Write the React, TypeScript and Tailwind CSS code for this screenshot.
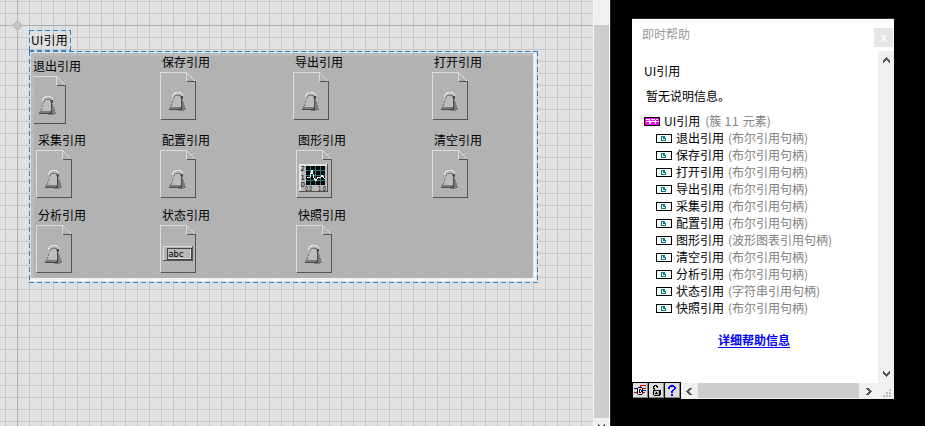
import React from "react";

type Kind = "bool" | "graph" | "string";

const PALETTE: Record<string, string> = {
  k: "#000000",
  w: "#e2e2e2",
  d: "#4b4b4b",
  s: "#7b7b7b",
  g: "#bdbdbd",
  b: "#0000ff",
  r: "#e00000",
  t: "#00807c",
  m: "#ff00ff",
  f: "#ffffff",
  c: "#585858",
};

function Pixels({ rows, className = "" }: { rows: string[]; className?: string }) {
  const w = rows[0].length;
  return (
    <svg width={w} height={rows.length} viewBox={`0 0 ${w} ${rows.length}`} shapeRendering="crispEdges" className={`block shrink-0 ${className}`}>
      {rows.flatMap((row, y) =>
        row.split("").map((c, x) => (c === "." ? null : <rect key={`${x}-${y}`} x={x} y={y} width={1} height={1} fill={PALETTE[c]} />)),
      )}
    </svg>
  );
}

const KNOB = [
  "......wwwwww.....",
  "....www....ww....",
  "....w........w...",
  "...ww.ssssss.w...",
  "...w.sgggggsdd...",
  ".....sgggggsdd...",
  ".....gggggggdd...",
  "....sgggggggd....",
  "....ggggggggds...",
  "...s.gggggggds...",
  "...s.gggggggdss..",
  "...gggggggggdss..",
  "..s.ggggggggdss..",
  "..s.ggggggggdsss.",
  ".s..ggggggggdsss.",
  ".sssssssssssdsss.",
  "sssssssssssddssss",
  "dddddddddddddssss",
  ".........ssssss..",
];

const CHEVRON_UP = ["...c...", "..ccc..", ".ccccc.", "ccc.ccc", "cc...cc", "c.....c"];
const CHEVRON_DOWN = [...CHEVRON_UP].reverse();
const CHEVRON_RIGHT = ["ccc...", ".ccc..", "..ccc.", "...ccc", "..ccc.", ".ccc..", "ccc..."];
const CHEVRON_LEFT = CHEVRON_RIGHT.map((r) => r.split("").reverse().join(""));

const REF_ICON = [
  "kkkkkkkkkkkkkkkk",
  "kffffffffffffffk",
  "kffffttttffffffk",
  "kfffftfttffffffk",
  "kfffftftttfffffk",
  "kfffftffftfffffk",
  "kfffftttttfffffk",
  "kffffffffffffffk",
  "kkkkkkkkkkkkkkkk",
];

const CLUSTER_ICON = [
  "kkkkkkkkkkkkkkkk",
  "kmmmmmmmmmmmmmmk",
  "kmffffmffffmffmk",
  "kmmmmfmmmmmfmmmk",
  "kmfffffffffffffk",
  "kmmmmffmmmmfmmmk",
  "kmmmmffmmmmfmmmk",
  "kmmmmmmmmmmmmmmk",
  "kkkkkkkkkkkkkkkk",
];

const WIRES = [
  "......rrrrrr",
  "......r.....",
  "....kkkk....",
  "bbbkffffkrrr",
  "...kfkkfk...",
  "...kfkfkkbbb",
  "...kfkfkk...",
  "rrrkfkkfkrr.",
  "...kffffk...",
  "....kkkk....",
];

const LOCK = [
  "..kkk....",
  ".kk.kk...",
  ".k...k...",
  ".kk......",
  "..k......",
  ".kkkkkkkk",
  ".kgggggkk",
  ".kggkggkk",
  ".kgkkkgkk",
  ".kgggggkk",
  "..kkkkkk.",
];

const QUESTION = [
  "..bbbb..",
  ".bbbbbb.",
  "bb....bb",
  "bb....bb",
  ".....bb.",
  "....bb..",
  "...bb...",
  "...bb...",
  "........",
  "...bb...",
  "...bb...",
];

function DocIcon({ kind }: { kind: Kind }) {
  return (
    <svg width="36" height="48" viewBox="0 0 36 48" className="block" shapeRendering="crispEdges">
      <path d="M0 0H27V1H1V47H0Z" fill="#dcdcdc" />
      <path d="M26 1h1v8h-1z" fill="#dcdcdc" />
      {[0, 1, 2, 3, 4, 5, 6, 7].map((i) => (
        <rect key={i} x={27 + i} y={1 + i} width="1" height="1" fill="#dcdcdc" />
      ))}
      <path d="M27 9h9v39H1v-1h34V10h-8z" fill="#555" />
      {kind === "bool" && (
        <g transform="translate(9 20)">
          {KNOB.flatMap((row, y) =>
            row.split("").map((c, x) => (c === "." ? null : <rect key={`${x}-${y}`} x={x} y={y} width="1" height="1" fill={PALETTE[c]} />)),
          )}
        </g>
      )}
      {kind === "string" && (
        <g>
          <path d="M3 21h30v15H3z" fill="#555" />
          <path d="M3 21h29v14H3z" fill="#ddd" />
          <path d="M4 22h28v13H4z" fill="#b2b2b2" />
          <path d="M7 23h25v12H7z" fill="#444" />
          <path d="M8 24h23v10H8z" fill="#ddd" />
          <path d="M8 24h22v9H8z" fill="#b8b8b8" />
          <text x="8.5" y="32" textLength="15" lengthAdjust="spacingAndGlyphs" fontSize="9" fontFamily="DejaVu Sans" fill="#000">abc</text>
        </g>
      )}
      {kind === "graph" && (
        <g>
          <path d="M3 14h29v28H3z" fill="#505050" />
          <path d="M3 14h28v27H3z" fill="#e4e4e4" />
          <path d="M5 16h26v25H5z" fill="#bababa" />
          <path d="M10 16h19v19H10z" fill="#050505" />
          <path d="M10 20.5h19M10 25.5h19M10 30.5h19M14.5 16v19M19.5 16v19M24.5 16v19" stroke="#287878" fill="none" />
          <path d="M11 27h3l2-7 2 8 2 3 2-4h3l1-2 3 4" stroke="#fff" fill="none" />
          <g fill="#000" fontFamily="DejaVu Sans" fontSize="7">
            <text x="4.5" y="21">2</text>
            <text x="4.5" y="30">1</text>
            <text x="4.5" y="37">0</text>
            <text x="9" y="40.5" textLength="7" lengthAdjust="spacingAndGlyphs">0.0</text>
            <text x="22" y="40.5" textLength="8" lengthAdjust="spacingAndGlyphs">1.0</text>
          </g>
        </g>
      )}
    </svg>
  );
}

const REFS: { name: string; x: number; y: number; kind: Kind }[] = [
  { name: "退出引用", x: 30, y: 76, kind: "bool" },
  { name: "保存引用", x: 160, y: 72, kind: "bool" },
  { name: "导出引用", x: 293, y: 72, kind: "bool" },
  { name: "打开引用", x: 432, y: 72, kind: "bool" },
  { name: "采集引用", x: 36, y: 150, kind: "bool" },
  { name: "配置引用", x: 160, y: 150, kind: "bool" },
  { name: "图形引用", x: 296, y: 150, kind: "graph" },
  { name: "清空引用", x: 432, y: 150, kind: "bool" },
  { name: "分析引用", x: 36, y: 225, kind: "bool" },
  { name: "状态引用", x: 160, y: 225, kind: "string" },
  { name: "快照引用", x: 296, y: 225, kind: "bool" },
];

const HELP_ROWS: [string, string][] = [
  ["退出引用", "(布尔引用句柄)"],
  ["保存引用", "(布尔引用句柄)"],
  ["打开引用", "(布尔引用句柄)"],
  ["导出引用", "(布尔引用句柄)"],
  ["采集引用", "(布尔引用句柄)"],
  ["配置引用", "(布尔引用句柄)"],
  ["图形引用", "(波形图表引用句柄)"],
  ["清空引用", "(布尔引用句柄)"],
  ["分析引用", "(布尔引用句柄)"],
  ["状态引用", "(字符串引用句柄)"],
  ["快照引用", "(布尔引用句柄)"],
];

function Selection({ w, h }: { w: number; h: number }) {
  return (
    <svg width={w} height={h} className="absolute inset-0 block" shapeRendering="crispEdges">
      <rect x="0.5" y="0.5" width={w - 1} height={h - 1} fill="none" stroke="#c0dcf3" />
      <path d={`M0 .5H${w}M0 ${h - 0.5}H${w}M.5 0V${h}M${w - 0.5} 0V${h}`} fill="none" stroke="#3d83bb" strokeDasharray="5 3" />
    </svg>
  );
}

function FrontPanel() {
  return (
    <section className="relative h-full w-[593px] shrink-0 overflow-hidden bg-[#e1e1e1]">
      <div className="absolute inset-0 bg-[linear-gradient(to_right,#c8c8c8_1px,transparent_1px),linear-gradient(to_bottom,#c8c8c8_1px,transparent_1px)] bg-[size:12px_12px] bg-[position:5px_1px]" />
      <div className="absolute left-[17px] top-0 h-full w-px bg-[#b0b0b0]" />
      <div className="absolute left-0 top-[25px] h-px w-full bg-[#b0b0b0]" />
      <svg width="11" height="11" className="absolute left-3 top-5">
        <path d="M5.5 .5L10.5 5.5L5.5 10.5L.5 5.5Z" fill="#c4c4c4" stroke="#b4b4b4" />
      </svg>

      <div className="absolute left-[29px] top-[30px] h-[21px] w-[42px]">
        <Selection w={42} h={21} />
        <span className="absolute left-0.5 top-px leading-[17px] tracking-[0.2px]">UI引用</span>
      </div>

      <div className="absolute left-[29px] top-[51px] h-[232px] w-[509px]">
        <div className="absolute inset-0.5 border-b-[3px] border-r-[3px] border-white/60" />
        <div className="absolute bottom-[5px] left-0.5 right-[5px] top-0.5 bg-[#b2b2b2]/80" />
        <div className="absolute bottom-[5px] left-[5px] right-[5px] top-[5px] bg-[#b2b2b2]" />
        <Selection w={509} h={232} />
      </div>

      {REFS.map((r, i) => (
        <div key={r.name}>
          <div className="absolute leading-4" style={{ left: i === 0 ? 33 : r.x + 2, top: r.y - 18 }}>
            {r.name}
          </div>
          {i === 0 ? (
            <div className="absolute left-[34px] top-[76px] flex w-8 justify-end overflow-hidden">
              <div className="shrink-0">
                <DocIcon kind={r.kind} />
              </div>
            </div>
          ) : (
            <div className="absolute" style={{ left: r.x, top: r.y }}>
              <DocIcon kind={r.kind} />
            </div>
          )}
        </div>
      ))}
    </section>
  );
}

function HelpWindow() {
  return (
    <aside className="mt-[18px] flex h-[381px] w-[262px] flex-col border-t border-[#2a2a2a] bg-white">
      <header className="flex h-8 shrink-0 justify-between">
        <span className="ml-2.5 mt-[7px] leading-4 text-[#999]">即时帮助</span>
        <span className="mr-px mt-[9px] flex h-[19px] w-[19px] items-center justify-center bg-[#e5e5e5] pb-0.5 font-bold text-[#f8f8f8]">x</span>
      </header>
      <div className="flex min-h-0 flex-1">
        <main className="flex flex-1 flex-col pl-3">
          <p className="mt-3 leading-4">UI引用</p>
          <p className="ml-0.5 mt-[9px] leading-4">暂无说明信息。</p>
          <div className="mt-[9px] flex h-[17px] items-center whitespace-pre leading-[17px]">
            <Pixels rows={CLUSTER_ICON} />
            <span className="-mt-0.5 ml-1">UI引用</span>
            <span className="-mt-0.5 ml-[5px] text-[#808080]">
              (簇<span className="tracking-[0.7px]"> 11 </span>元素)
            </span>
          </div>
          {HELP_ROWS.map(([name, type]) => (
            <div key={name} className="flex h-[17px] items-center pl-3 leading-[17px]">
              <Pixels rows={REF_ICON} />
              <span className="-mt-0.5 ml-1">{name}</span>
              <span className="-mt-0.5 ml-1 text-[#808080]">{type}</span>
            </div>
          ))}
          <a className="ml-[74px] mt-[15px] self-start border-b border-[#0000ff] font-bold leading-[15px] text-[#0000ff]">详细帮助信息</a>
        </main>
        <div className="flex w-4 flex-col items-center justify-between bg-[#f0f0f0] pb-1.5 pt-1.5">
          <Pixels rows={CHEVRON_UP} />
          <Pixels rows={CHEVRON_DOWN} />
        </div>
      </div>
      <footer className="flex h-4 shrink-0 bg-[#f0f0f0]">
        <div className="-mt-px flex h-[17px] w-[49px] gap-px bg-black p-px">
          {[WIRES, LOCK, QUESTION].map((rows, i) => (
            <div key={i} className="flex h-[15px] flex-1 items-center justify-center border-b border-r border-[#858585] bg-[#dedede]">
              <Pixels rows={rows} />
            </div>
          ))}
        </div>
        <div className="flex flex-1 items-center">
          <Pixels rows={CHEVRON_LEFT} className="ml-[5px]" />
          <div className="ml-1.5 h-[15px] w-[161px] self-start bg-[#cdcdcd]" />
          <Pixels rows={CHEVRON_RIGHT} className="ml-[7px]" />
          <svg width="8" height="8" className="ml-auto mr-[3px] mt-1" shapeRendering="crispEdges">
            <path d="M6 0h2v2H6zM3 3h2v2H3zM6 3h2v2H6zM0 6h2v2H0zM3 6h2v2H3zM6 6h2v2H6z" fill="#bcbcbc" />
          </svg>
        </div>
      </footer>
    </aside>
  );
}

export default function App() {
  return (
    <div className="flex h-[426px] w-[925px] overflow-hidden bg-black font-['Noto_Sans_CJK_SC',sans-serif] text-[12px] text-black">
      <FrontPanel />
      <div className="flex w-[17px] shrink-0 flex-col items-center border-x border-[#f7f7f7] bg-[#f0f0f0]">
        <div className="mt-[25px] h-[393px] w-full shrink-0 bg-[#cdcdcd]" />
        <Pixels rows={CHEVRON_DOWN} className="mt-1.5" />
      </div>
      <div className="mr-[21px] w-px shrink-0 bg-[#222]" />
      <HelpWindow />
    </div>
  );
}
